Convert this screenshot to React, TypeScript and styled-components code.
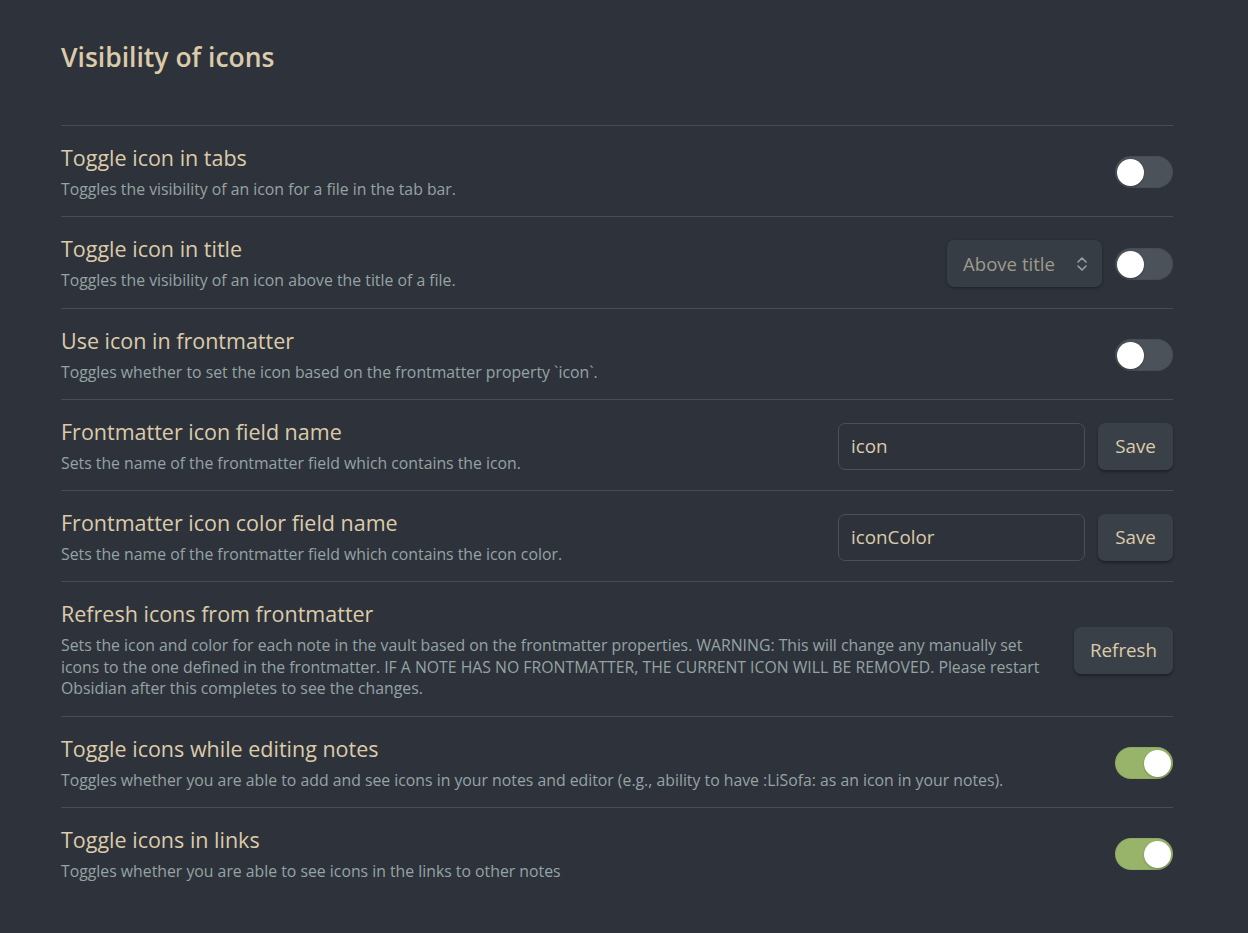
import React, { useState } from "react";
import styled, { createGlobalStyle } from "styled-components";

const Global = createGlobalStyle`
  html, body { margin: 0; padding: 0; background: #2e333b; }
  body { font-family: "Open Sans", "Noto Sans", sans-serif; }
  * { box-sizing: border-box; }
`;

const Page = styled.div`
  min-height: 933px;
  background: #2e333b;
  padding: 37px 75px 30px 61px;
`;

const Heading = styled.h2`
  margin: 0 0 48px 0;
  font-size: 26.5px;
  font-weight: 600;
  color: #dccbaa;
  line-height: 40px;
`;

const Item = styled.div`
  display: flex;
  align-items: center;
  gap: 34px;
  padding: 18px 0 15.8px 0;
  border-top: 1px solid #474d55;
`;

const Info = styled.div`
  flex: 1;
  display: flex;
  flex-direction: column;
  gap: 7px;
`;

const Name = styled.div`
  font-size: 21.5px;
  color: #dccbaa;
  line-height: 28px;
`;

const Desc = styled.div`
  font-size: 15.8px;
  color: #95a3a4;
  line-height: 21.5px;
`;

const Controls = styled.div`
  display: flex;
  align-items: center;
  gap: 13px;
  flex-shrink: 0;
`;

const Track = styled.button<{ $on: boolean }>`
  width: 58px;
  height: 32px;
  border-radius: 16px;
  border: none;
  padding: 0;
  background: ${(p) => (p.$on ? "#97b46a" : "#4b525a")};
  position: relative;
  cursor: pointer;
  box-shadow: inset 0 0 0 1px rgba(0,0,0,0.05);
`;

const Knob = styled.span<{ $on: boolean }>`
  position: absolute;
  top: 3px;
  left: ${(p) => (p.$on ? "29px" : "2px")};
  width: 27px;
  height: 27px;
  border-radius: 50%;
  background: #ffffff;
  box-shadow: 0 1px 2px rgba(0,0,0,0.25);
`;

const Select = styled.div`
  width: 155px;
  height: 47px;
  border-radius: 7px;
  background: #373d45;
  box-shadow: 0 1px 3px rgba(0,0,0,0.35);
  display: flex;
  align-items: center;
  justify-content: space-between;
  padding: 0 13px 0 16px;
  font-size: 18.6px;
  color: #9d9a8c;
`;

const Input = styled.input`
  width: 247px;
  height: 47px;
  border-radius: 7px;
  border: 1px solid #4a5058;
  background: #2e333b;
  color: #dccbaa;
  font-family: inherit;
  font-size: 18.8px;
  padding: 0 12px;
  outline: none;
`;

const Button = styled.button<{ $w: number }>`
  width: ${(p) => p.$w}px;
  height: 47px;
  border-radius: 7px;
  border: none;
  background: #3a4048;
  color: #dccbaa;
  font-family: inherit;
  font-size: 18.8px;
  box-shadow: 0 2px 3px rgba(0,0,0,0.35);
  cursor: pointer;
`;

function Toggle({ initial }: { initial: boolean }) {
  const [on, setOn] = useState(initial);
  return (
    <Track $on={on} onClick={() => setOn(!on)}>
      <Knob $on={on} />
    </Track>
  );
}

const Chevrons = () => (
  <svg width="14" height="18" viewBox="0 0 14 18" fill="none" stroke="#9aa0a6" strokeWidth="1.6" strokeLinecap="round" strokeLinejoin="round">
    <polyline points="3,7 7,3 11,7" />
    <polyline points="3,11 7,15 11,11" />
  </svg>
);

export default function App() {
  return (
    <Page>
      <Global />
      <Heading>Visibility of icons</Heading>
      <Item>
        <Info>
          <Name>Toggle icon in tabs</Name>
          <Desc>Toggles the visibility of an icon for a file in the tab bar.</Desc>
        </Info>
        <Controls>
          <Toggle initial={false} />
        </Controls>
      </Item>
      <Item>
        <Info>
          <Name>Toggle icon in title</Name>
          <Desc>Toggles the visibility of an icon above the title of a file.</Desc>
        </Info>
        <Controls>
          <Select>
            <span>Above title</span>
            <Chevrons />
          </Select>
          <Toggle initial={false} />
        </Controls>
      </Item>
      <Item>
        <Info>
          <Name>Use icon in frontmatter</Name>
          <Desc>Toggles whether to set the icon based on the frontmatter property `icon`.</Desc>
        </Info>
        <Controls>
          <Toggle initial={false} />
        </Controls>
      </Item>
      <Item>
        <Info>
          <Name>Frontmatter icon field name</Name>
          <Desc>Sets the name of the frontmatter field which contains the icon.</Desc>
        </Info>
        <Controls>
          <Input defaultValue="icon" />
          <Button $w={75}>Save</Button>
        </Controls>
      </Item>
      <Item>
        <Info>
          <Name>Frontmatter icon color field name</Name>
          <Desc>Sets the name of the frontmatter field which contains the icon color.</Desc>
        </Info>
        <Controls>
          <Input defaultValue="iconColor" />
          <Button $w={75}>Save</Button>
        </Controls>
      </Item>
      <Item>
        <Info>
          <Name>Refresh icons from frontmatter</Name>
          <Desc>
            Sets the icon and color for each note in the vault based on the frontmatter properties. WARNING: This will change any manually set icons to the one defined in the frontmatter. IF A NOTE HAS NO FRONTMATTER, THE CURRENT ICON WILL BE REMOVED. Please restart Obsidian after this completes to see the changes.
          </Desc>
        </Info>
        <Controls>
          <Button $w={99}>Refresh</Button>
        </Controls>
      </Item>
      <Item>
        <Info>
          <Name>Toggle icons while editing notes</Name>
          <Desc>Toggles whether you are able to add and see icons in your notes and editor (e.g., ability to have :LiSofa: as an icon in your notes).</Desc>
        </Info>
        <Controls>
          <Toggle initial={true} />
        </Controls>
      </Item>
      <Item>
        <Info>
          <Name>Toggle icons in links</Name>
          <Desc>Toggles whether you are able to see icons in the links to other notes</Desc>
        </Info>
        <Controls>
          <Toggle initial={true} />
        </Controls>
      </Item>
    </Page>
  );
}
